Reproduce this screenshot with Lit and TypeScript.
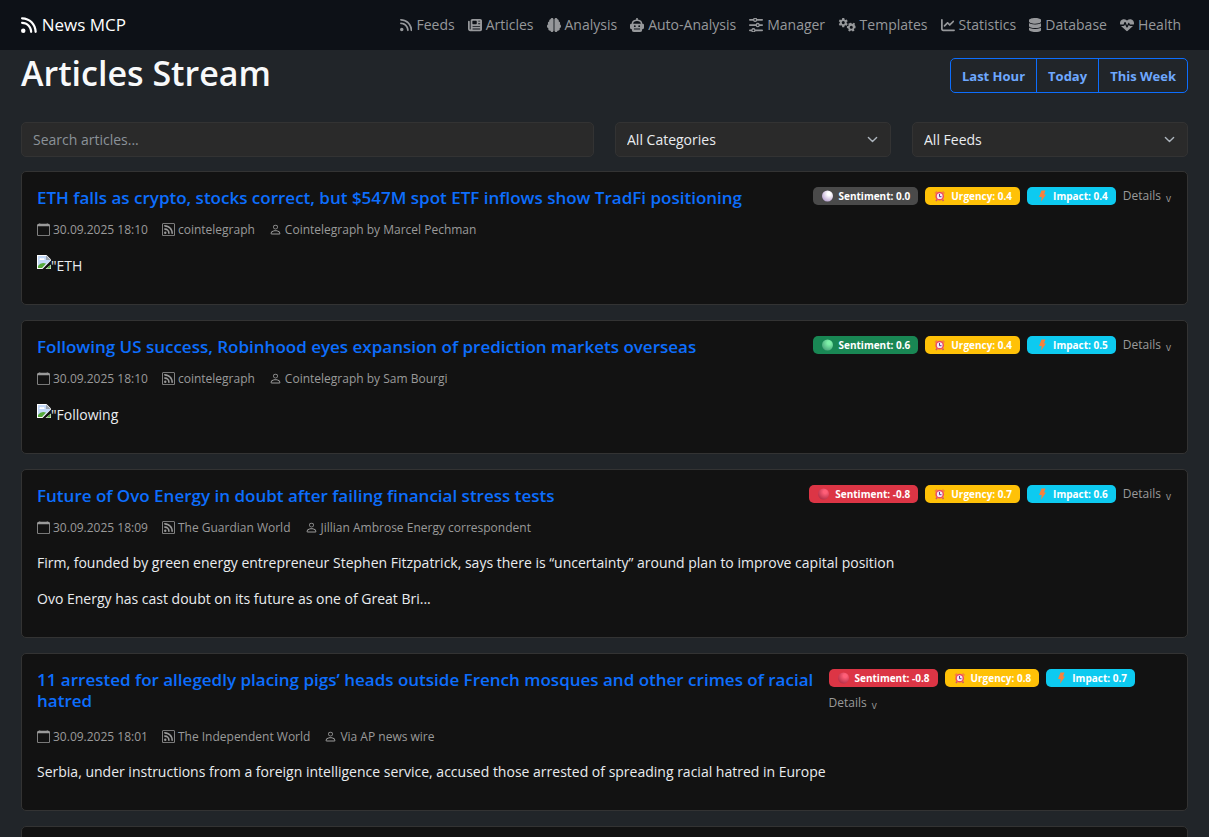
import { LitElement, html, css, svg } from "lit";
import { customElement, property } from "lit/decorators.js";

type Icon = { w: number; h: number; d: string };

const icons: Record<string, Icon> = {
  rss: { w: 448, h: 512, d: "M0 64C0 46.3 14.3 32 32 32c229.8 0 416 186.2 416 416c0 17.7-14.3 32-32 32s-32-14.3-32-32C384 253.6 226.4 96 32 96C14.3 96 0 81.7 0 64zM0 416a64 64 0 1 1 128 0A64 64 0 1 1 0 416zM32 160c159.1 0 288 128.9 288 288c0 17.7-14.3 32-32 32s-32-14.3-32-32c0-123.7-100.3-224-224-224c-17.7 0-32-14.3-32-32s14.3-32 32-32z" },
  newspaper: { w: 512, h: 512, d: "M96 96c0-35.3 28.7-64 64-64H448c35.3 0 64 28.7 64 64V416c0 35.3-28.7 64-64 64H80c-44.2 0-80-35.8-80-80V128c0-17.7 14.3-32 32-32s32 14.3 32 32V400c0 8.8 7.2 16 16 16s16-7.2 16-16V96zm64 24v80c0 13.3 10.7 24 24 24H296c13.3 0 24-10.7 24-24V120c0-13.3-10.7-24-24-24H184c-13.3 0-24 10.7-24 24zm208-8c0 8.8 7.2 16 16 16h48c8.8 0 16-7.2 16-16s-7.2-16-16-16H384c-8.8 0-16 7.2-16 16zm0 96c0 8.8 7.2 16 16 16h48c8.8 0 16-7.2 16-16s-7.2-16-16-16H384c-8.8 0-16 7.2-16 16zM160 304c0 8.8 7.2 16 16 16H432c8.8 0 16-7.2 16-16s-7.2-16-16-16H176c-8.8 0-16 7.2-16 16zm0 96c0 8.8 7.2 16 16 16H432c8.8 0 16-7.2 16-16s-7.2-16-16-16H176c-8.8 0-16 7.2-16 16z" },
  brain: { w: 512, h: 512, d: "M184 0c30.9 0 56 25.1 56 56V456c0 30.9-25.1 56-56 56c-28.9 0-52.7-21.9-55.7-50.1c-5.2 1.4-10.7 2.1-16.3 2.1c-35.3 0-64-28.7-64-64c0-7.4 1.3-14.6 3.6-21.2C21.4 367.4 0 338.2 0 304c0-31.9 18.7-59.5 45.8-72.3C37.1 220.8 32 207 32 192c0-30.7 21.6-56.3 50.4-62.6C80.8 123.9 80 118 80 112c0-29.9 20.6-55.1 48.3-62.1C131.3 21.9 155.1 0 184 0zM328 0c28.9 0 52.6 21.9 55.7 49.9c27.8 7 48.3 32.1 48.3 62.1c0 6-.8 11.9-2.4 17.4c28.8 6.2 50.4 31.9 50.4 62.6c0 15-5.1 28.8-13.8 39.7C493.3 244.5 512 272.1 512 304c0 34.2-21.4 63.4-51.6 74.8c2.3 6.6 3.6 13.8 3.6 21.2c0 35.3-28.7 64-64 64c-5.6 0-11.1-.7-16.3-2.1c-3 28.2-26.8 50.1-55.7 50.1c-30.9 0-56-25.1-56-56V56c0-30.9 25.1-56 56-56z" },
  robot: { w: 512, h: 512, d: "M226 20a30 30 0 0 1 60 0V56C390 64 448 128 452 208H464A48 48 0 0 1 512 256V352A48 48 0 0 1 464 400H448V432A80 80 0 0 1 368 512H144A80 80 0 0 1 64 432V400H48A48 48 0 0 1 0 352V256A48 48 0 0 1 48 208H60C64 128 122 64 226 56zM116 208H396C390 146 346 112 256 112S122 146 116 208zM176 264a34 34 0 1 0 0 68a34 34 0 1 0 0-68zM336 264a34 34 0 1 0 0 68a34 34 0 1 0 0-68zM144 384V424H368V384z" },
  sliders: { w: 512, h: 512, d: "M0 64A32 32 0 0 1 32 32H150A80 80 0 0 1 298 32H480a32 32 0 0 1 0 64H298A80 80 0 0 1 150 96H32A32 32 0 0 1 0 64zM224 32a32 32 0 1 0 0 64a32 32 0 1 0 0-64zM32 224H246A80 80 0 0 1 394 224H480a32 32 0 0 1 0 64H394A80 80 0 0 1 246 288H32a32 32 0 0 1 0-64zM320 224a32 32 0 1 0 0 64a32 32 0 1 0 0-64zM32 416H86A80 80 0 0 1 234 416H480a32 32 0 0 1 0 64H234A80 80 0 0 1 86 480H32a32 32 0 0 1 0-64zM160 416a32 32 0 1 0 0 64a32 32 0 1 0 0-64z" },
  gears: { w: 640, h: 512, d: "M155 0H229L239 51L270 69L319 52L356 116L317 150V186L356 220L319 284L270 267L239 285L229 336H155L145 285L114 267L65 284L28 220L67 186V150L28 116L65 52L114 69L145 51zM192 112a56 56 0 1 0 0 112a56 56 0 1 0 0-112zM425 186L478 170L506 214H540L570 172L621 201L606 250L624 281L640 284V372L602 378L584 408L602 462L536 492L504 456H468L434 494L374 462L390 410L374 382L326 370V302L374 290L390 260L376 212L430 186L468 214zM486 280a56 56 0 1 0 0 112a56 56 0 1 0 0-112z" },
  chart: { w: 512, h: 512, d: "M64 64c0-17.7-14.3-32-32-32S0 46.3 0 64V400c0 44.2 35.8 80 80 80H480c17.7 0 32-14.3 32-32s-14.3-32-32-32H80c-8.8 0-16-7.2-16-16V64zm406.6 86.6c12.5-12.5 12.5-32.8 0-45.3s-32.8-12.5-45.3 0L320 210.7l-57.4-57.4c-12.5-12.5-32.8-12.5-45.3 0l-112 112c-12.5 12.5-12.5 32.8 0 45.3s32.8 12.5 45.3 0L240 221.3l57.4 57.4c12.5 12.5 32.8 12.5 45.3 0l128-128z" },
  database: { w: 448, h: 512, d: "M448 80v48c0 44.2-100.3 80-224 80S0 172.2 0 128V80C0 35.8 100.3 0 224 0S448 35.8 448 80zM393.2 214.7c20.8-7.4 39.9-16.9 54.8-28.6V288c0 44.2-100.3 80-224 80S0 332.2 0 288V186.1c14.9 11.8 34 21.2 54.8 28.6C99.7 230.7 159.5 240 224 240s124.3-9.3 169.2-25.3zM0 346.1c14.9 11.8 34 21.2 54.8 28.6C99.7 390.7 159.5 400 224 400s124.3-9.3 169.2-25.3c20.8-7.4 39.9-16.9 54.8-28.6V432c0 44.2-100.3 80-224 80S0 476.2 0 432V346.1z" },
  heart: { w: 512, h: 512, d: "M228.3 469.1L47.6 300.4c-4.2-3.9-8.2-8.1-11.9-12.4h87c22.6 0 43-13.6 51.7-34.5l10.5-25.2 49.3 109.5c3.8 8.5 12.1 14 21.4 14.1s17.8-5 22-13.3L320 253.7l1.7 3.4c9.5 19 28.9 31 50.1 31H476.3c-3.7 4.3-7.7 8.5-11.9 12.4L283.7 469.1c-7.5 7-17.4 10.9-27.7 10.9s-20.2-3.9-27.7-10.9zM503.7 240h-132c-3 0-5.8-1.7-7.2-4.4l-23.2-46.3c-4.1-8.1-12.4-13.3-21.5-13.3s-17.4 5.1-21.5 13.3l-41.4 82.8L205.9 158.2c-3.9-8.7-12.7-14.3-22.2-14.1s-18.1 5.9-21.8 14.8l-31.8 76.3c-1.2 3-4.2 4.9-7.4 4.9H16c-2.6 0-5 .4-7.3 1.1C3 225.2 0 208.2 0 190.9v-5.8c0-69.9 50.5-129.5 119.4-141C165 36.5 211.4 51.4 244 84l12 12 12-12c32.6-32.6 79-47.5 124.6-39.9C461.5 55.6 512 115.2 512 185.1v5.8c0 16.9-2.8 33.5-8.3 49.1z" },
  calendar: { w: 16, h: 16, d: "M3.5 0a.5.5 0 0 1 .5.5V1h8V.5a.5.5 0 0 1 1 0V1h1a2 2 0 0 1 2 2v11a2 2 0 0 1-2 2H2a2 2 0 0 1-2-2V3a2 2 0 0 1 2-2h1V.5a.5.5 0 0 1 .5-.5M1 4v10a1 1 0 0 0 1 1h12a1 1 0 0 0 1-1V4z" },
  feed: { w: 16, h: 16, d: "M14 1a1 1 0 0 1 1 1v12a1 1 0 0 1-1 1H2a1 1 0 0 1-1-1V2a1 1 0 0 1 1-1zM2 0a2 2 0 0 0-2 2v12a2 2 0 0 0 2 2h12a2 2 0 0 0 2-2V2a2 2 0 0 0-2-2zM5.5 12a1.5 1.5 0 1 1-3 0 1.5 1.5 0 0 1 3 0m-3-8.500a1 1 0 0 1 1-1c5.523 0 10 4.477 10 10a1 1 0 1 1-2 0 8 8 0 0 0-8-8 1 1 0 0 1-1-1m0 4a1 1 0 0 1 1-1 6 6 0 0 1 6 6 1 1 0 1 1-2 0 4 4 0 0 0-4-4 1 1 0 0 1-1-1" },
  person: { w: 16, h: 16, d: "M8 8a3 3 0 1 0 0-6 3 3 0 0 0 0 6m2-3a2 2 0 1 1-4 0 2 2 0 0 1 4 0m4 8c0 1-1 1-1 1H3s-1 0-1-1 1-4 6-4 6 3 6 4m-1-.004c-.001-.246-.154-.986-.832-1.664C11.516 10.68 10.289 10 8 10s-3.516.68-4.168 1.332c-.678.678-.83 1.418-.832 1.664z" },
};

const glyph = (name: string) => {
  const i = icons[name];
  return html`<svg class="icon ${name}" viewBox="0 0 ${i.w} ${i.h}" aria-hidden="true">${svg`<path fill-rule="evenodd" d=${i.d} />`}</svg>`;
};

const orbColors: Record<string, [string, string]> = {
  neutral: ["#ffffff", "#b9a3cf"],
  positive: ["#7df0a8", "#4aa57c"],
  negative: ["#ff5f78", "#b52f48"],
};

const orb = (tone: string) => html`<svg class="mark" viewBox="0 0 12 12" aria-hidden="true">
  <defs><radialGradient id="orb" cx="0.65" cy="0.3" r="0.75">
    <stop offset="0.2" stop-color=${orbColors[tone][0]} /><stop offset="1" stop-color=${orbColors[tone][1]} />
  </radialGradient></defs>
  <circle cx="6" cy="6" r="5.5" fill="url(#orb)" />
</svg>`;

const clock = html`<svg class="mark" viewBox="0 0 12 12" aria-hidden="true">
  <path d="M1.5 3.5L3.5 1.5M11 3.5L9 1.5" stroke="#f5803e" stroke-width="1.6" />
  <path d="M3.5 9.5L2.5 11M9 9.5L10 11" stroke="#c9566f" stroke-width="1.5" />
  <circle cx="6.2" cy="6.2" r="3.6" fill="#f4e8f4" stroke="#ef4a63" stroke-width="1.5" />
  <path d="M6 4V6.7H8" stroke="#59438a" fill="none" />
</svg>`;

const bolt = html`<svg class="mark" viewBox="0 0 12 12" aria-hidden="true">
  <path d="M6 0.5H10L8.5 4.5H10.5L5.5 11.8L6.2 7H3.5z" fill="#f9813c" />
</svg>`;

const brokenImage = html`<svg class="broken" viewBox="0 0 14 14" aria-hidden="true">
  <path d="M0 0H9.5L14 4.5V14H0z" fill="#fff" />
  <path d="M1 1H9V5H13V6L5 13H1z" fill="#c3d9f8" />
  <path d="M2.5 5a1.5 1.5 0 0 1 2.5-1.5a1.5 1.5 0 0 1 2.5 1.5z" fill="#fff" />
  <path d="M1 11Q4 6.5 9 8.5L5 13H1z" fill="#56ab3c" />
  <path d="M9 0.5V5H13.5z" fill="#9aa4b0" />
  <path d="M14 5.5L5.5 14H8.5L14 9.5z" fill="#121212" />
  <path d="M9.5 13.5H13.5V10z" fill="#56ab3c" />
</svg>`;

interface Article {
  title: string;
  date: string;
  feed: string;
  author: string;
  tone: string;
  scores: [string, string, string];
  missingImage?: string;
  body?: string[];
}

const articles: Article[] = [
  { title: "ETH falls as crypto, stocks correct, but $547M spot ETF inflows show TradFi positioning", date: "30.09.2025 18:10", feed: "cointelegraph", author: "Cointelegraph by Marcel Pechman", tone: "neutral", scores: ["0.0", "0.4", "0.4"], missingImage: '"ETH' },
  { title: "Following US success, Robinhood eyes expansion of prediction markets overseas", date: "30.09.2025 18:10", feed: "cointelegraph", author: "Cointelegraph by Sam Bourgi", tone: "positive", scores: ["0.6", "0.4", "0.5"], missingImage: '"Following' },
  { title: "Future of Ovo Energy in doubt after failing financial stress tests", date: "30.09.2025 18:09", feed: "The Guardian World", author: "Jillian Ambrose Energy correspondent", tone: "negative", scores: ["-0.8", "0.7", "0.6"], body: ["Firm, founded by green energy entrepreneur Stephen Fitzpatrick, says there is “uncertainty” around plan to improve capital position", "Ovo Energy has cast doubt on its future as one of Great Bri..."] },
  { title: "11 arrested for allegedly placing pigs’ heads outside French mosques and other crimes of racial hatred", date: "30.09.2025 18:01", feed: "The Independent World", author: "Via AP news wire", tone: "negative", scores: ["-0.8", "0.8", "0.7"], body: ["Serbia, under instructions from a foreign intelligence service, accused those arrested of spreading racial hatred in Europe"] },
];

const links: [string, string][] = [
  ["rss", "Feeds"], ["newspaper", "Articles"], ["brain", "Analysis"], ["robot", "Auto-Analysis"], ["sliders", "Manager"],
  ["gears", "Templates"], ["chart", "Statistics"], ["database", "Database"], ["heart", "Health"],
];

const shared = css`
  * { box-sizing: border-box; margin: 0; }
  .icon { height: 14px; fill: currentColor; flex: none; }
`;

@customElement("article-card")
export class ArticleCard extends LitElement {
  @property({ attribute: false }) article?: Article;

  static styles = [shared, css`
    :host { display: block; background: #121212; border: 1px solid #333; border-radius: 5px; padding: 15px 15px 27px; min-height: 80px; }
    .head { display: flex; justify-content: space-between; align-items: flex-start; }
    h2 { font-size: 17px; line-height: 21px; font-weight: 600; }
    h2 a { color: #0d6efd; text-decoration: none; }
    .scores { display: flex; flex-wrap: wrap; gap: 7px; align-items: center; padding-bottom: 3px; }
    .badge { display: flex; align-items: center; gap: 5px; height: 18px; padding: 0 8px; border-radius: 5px; color: #fff; font-size: 10px; font-weight: 700; white-space: nowrap; }
    .mark { width: 13px; height: 12px; }
    .neutral { background: #4a4a4a; }
    .positive { background: #198754; }
    .negative { background: #dc3545; }
    .urgency { background: #ffc107; }
    .impact { background: #0dcaf0; }
    .details { display: flex; align-items: center; gap: 5px; height: 18px; border: 0; padding: 0 1px 0 0; background: none; color: #9a9a9a; font: inherit; font-size: 12px; line-height: 18px; }
    .arrow { font-size: 10px; padding-top: 4px; }
    .meta { display: flex; flex-wrap: wrap; gap: 14px; margin-top: 12px; color: #9a9a9a; font-size: 12px; line-height: 19px; }
    .meta span { display: flex; align-items: center; gap: 3px; }
    .meta .icon { height: 13px; }
    .text { display: grid; gap: 14px; margin-top: 15px; color: #e9ecef; line-height: 22px; }
    .picture { display: flex; margin-top: 1px; }
    .broken { width: 14px; height: 14px; }
  `];

  render() {
    const a = this.article;
    if (!a) return html``;
    return html`
      <div class="head">
        <h2><a href="#">${a.title}</a></h2>
        <div class="scores">
          <span class="badge ${a.tone}">${orb(a.tone)}Sentiment: ${a.scores[0]}</span>
          <span class="badge urgency">${clock}Urgency: ${a.scores[1]}</span>
          <span class="badge impact">${bolt}Impact: ${a.scores[2]}</span>
          <button class="details" type="button">Details<span class="arrow">v</span></button>
        </div>
      </div>
      <div class="meta">
        <span>${glyph("calendar")}${a.date}</span>
        <span>${glyph("feed")}${a.feed}</span>
        <span>${glyph("person")}${a.author}</span>
      </div>
      <div class="text">
        ${a.missingImage ? html`<p class="picture">${brokenImage}${a.missingImage}</p>` : ""}
        ${(a.body ?? []).map((p) => html`<p>${p}</p>`)}
      </div>`;
  }
}

@customElement("app-root")
export class AppRoot extends LitElement {
  static styles = [shared, css`
    :host { display: block; height: 100vh; overflow: hidden; background: #212529; color: #f8f9fa; font: 14px/22px "Open Sans", "Noto Sans", sans-serif; }
    .bar { display: flex; align-items: center; justify-content: space-between; height: 50px; padding: 0 28px 0 21px; background: #0d1117; }
    .bar a { display: flex; align-items: center; gap: 4px; text-decoration: none; color: #96989b; }
    .bar a.brand { color: #fff; font-size: 17px; gap: 5px; }
    .brand .icon { height: 18px; }
    nav { display: flex; gap: 13px; }
    main { padding: 0 21px; }
    .top { display: flex; justify-content: space-between; align-items: flex-end; height: 43px; }
    h1 { font-size: 34px; line-height: 39px; font-weight: 600; }
    .range { display: flex; }
    .range button { height: 35px; padding: 0 11px; margin-left: -1px; border: 1px solid #0d6efd; background: none; color: #6ea8fe; font: inherit; font-size: 13px; font-weight: 700; }
    .range button:first-child { border-radius: 5px 0 0 5px; }
    .range button:last-child { border-radius: 0 5px 5px 0; }
    .filters { display: grid; grid-template-columns: 573fr 276fr 276fr; gap: 21px; margin: 29px 0 14px; }
    .filters input, .filters select { width: 100%; height: 35px; padding: 0 11px; border: 1px solid #333; border-radius: 5px; background: #2a2a2a; color: #e9ecef; font: inherit; appearance: none; }
    .filters input::placeholder { color: #8b9299; opacity: 1; }
    .pick { display: grid; align-items: center; }
    .pick > * { grid-area: 1 / 1; }
    .caret { width: 11px; height: 11px; justify-self: end; margin-right: 13px; pointer-events: none; fill: none; stroke: #adb5bd; stroke-width: 2; stroke-linecap: round; stroke-linejoin: round; }
    .stream { display: grid; gap: 15px; }
  `];

  private pick(label: string) {
    return html`<div class="pick">
      <select aria-label=${label}><option>${label}</option></select>
      <svg class="caret" viewBox="0 0 16 16" aria-hidden="true"><path d="M2 5l6 6 6-6" /></svg>
    </div>`;
  }

  render() {
    return html`
      <header class="bar">
        <a class="brand" href="#">${glyph("rss")}News MCP</a>
        <nav>${links.map(([icon, label]) => html`<a href="#">${glyph(icon)}${label}</a>`)}</nav>
      </header>
      <main>
        <div class="top">
          <h1>Articles Stream</h1>
          <div class="range">
            <button type="button">Last Hour</button><button type="button">Today</button><button type="button">This Week</button>
          </div>
        </div>
        <div class="filters">
          <input type="search" aria-label="Search articles" placeholder="Search articles..." />
          ${this.pick("All Categories")}${this.pick("All Feeds")}
        </div>
        <div class="stream">
          ${articles.map((a) => html`<article-card .article=${a}></article-card>`)}
          <article-card></article-card>
        </div>
      </main>`;
  }
}
